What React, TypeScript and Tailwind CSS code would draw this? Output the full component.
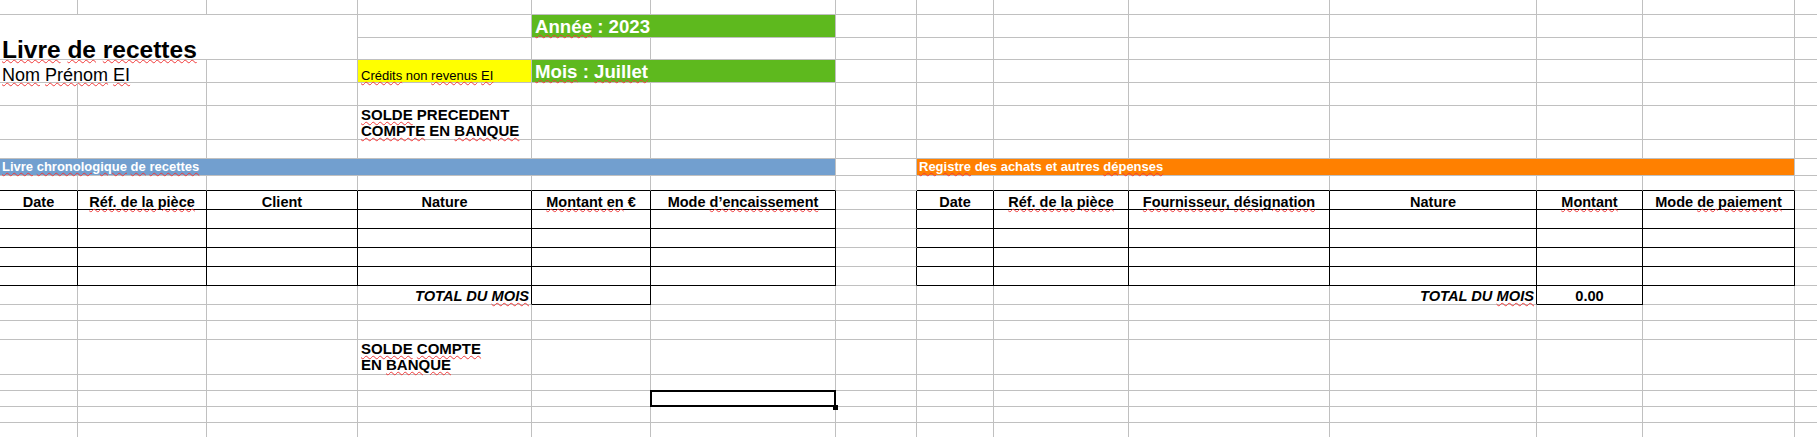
import React from 'react';

// petit soulignement ondulé rouge (correcteur orthographique)
const Sq = ({ children }: { children: React.ReactNode }) => (
  <span className="underline decoration-wavy decoration-[#f03a3a] decoration-1 underline-offset-[1px]">
    {children}
  </span>
);

type CellSpec = {
  span?: number;
  rows?: number;
  className?: string;
  content?: React.ReactNode;
};

const COL_SPAN: Record<number, string> = {
  1: '',
  2: 'col-span-2',
  3: 'col-span-3',
  6: 'col-span-6',
};

const ROW_SPAN: Record<number, string> = {
  1: '',
  2: 'row-span-2',
};

const header = 'flex items-end justify-center pb-0 text-[14.5px] font-bold leading-none whitespace-nowrap';

const leftHeaders: React.ReactNode[] = [
  'Date',
  <Sq>Réf. de la pièce</Sq>,
  'Client',
  'Nature',
  <>
    <Sq>Montant en</Sq> €
  </>,
  <>
    Mode <Sq>d’encaissement</Sq>
  </>,
];

const rightHeaders: React.ReactNode[] = [
  'Date',
  <Sq>Réf. de la pièce</Sq>,
  <>
    <Sq>Fournisseur</Sq>, <Sq>désignation</Sq>
  </>,
  'Nature',
  <Sq>Montant</Sq>,
  <>
    Mode <Sq>de paiement</Sq>
  </>,
];

const specs: Record<string, CellSpec> = {
  '2-1': {
    span: 3,
    rows: 2,
    className: 'flex items-end pl-[2px] text-[24.5px] font-bold leading-[18px] whitespace-nowrap',
    content: (
      <span>
        <Sq>Livre</Sq> <Sq>de</Sq> <Sq>recettes</Sq>
      </span>
    ),
  },
  '2-5': {
    span: 2,
    className: 'flex items-end bg-[#5eb91e] pl-[3px] text-[18.67px] font-bold leading-none text-white',
    content: (
      <span>
        <Sq>Année</Sq> : 2023
      </span>
    ),
  },
  '4-1': {
    span: 2,
    className: 'flex items-end pl-[2px] text-[18px] leading-[14px] whitespace-nowrap',
    content: (
      <span>
        <Sq>Nom</Sq> <Sq>Prénom</Sq> <Sq>EI</Sq>
      </span>
    ),
  },
  '4-4': {
    className: 'flex items-end bg-[#ffff00] pl-[3px] text-[13px] leading-none whitespace-nowrap',
    content: (
      <span>
        <Sq>Crédits</Sq> non <Sq>revenus</Sq> <Sq>EI</Sq>
      </span>
    ),
  },
  '4-5': {
    span: 2,
    className: 'flex items-end bg-[#5eb91e] pl-[3px] text-[18.67px] font-bold leading-none text-white',
    content: (
      <span>
        <Sq>Mois</Sq> : <Sq>Juillet</Sq>
      </span>
    ),
  },
  '6-4': {
    className: 'flex items-end pl-[3px] text-[15px] font-bold leading-[16px] whitespace-nowrap',
    content: (
      <span>
        <Sq>SOLDE</Sq> PRECEDENT
        <br />
        <Sq>COMPTE</Sq> EN <Sq>BANQUE</Sq>
      </span>
    ),
  },
  '8-1': {
    span: 6,
    className: 'flex items-end bg-[#729fcf] pl-[2px] pb-[2px] text-[13px] font-bold leading-none text-white',
    content: (
      <span>
        <Sq>Livre</Sq> <Sq>chronologique</Sq> <Sq>de</Sq> <Sq>recettes</Sq>
      </span>
    ),
  },
  '8-8': {
    span: 6,
    className: 'flex items-end bg-[#ff8000] pl-[2px] pb-[2px] text-[13px] font-bold leading-none text-white',
    content: (
      <span>
        <Sq>Registre</Sq> des achats et autres <Sq>dépenses</Sq>
      </span>
    ),
  },
  '15-4': {
    className: 'flex items-end justify-end pr-[2px] text-[14.67px] font-bold italic leading-none whitespace-nowrap',
    content: (
      <span>
        TOTAL DU <Sq>MOIS</Sq>
      </span>
    ),
  },
  '15-11': {
    className: 'flex items-end justify-end pr-[2px] text-[14.67px] font-bold italic leading-none whitespace-nowrap',
    content: (
      <span>
        TOTAL DU <Sq>MOIS</Sq>
      </span>
    ),
  },
  '15-12': {
    className: 'flex items-end justify-center text-[14.67px] font-bold leading-none',
    content: <span>0.00</span>,
  },
  '18-4': {
    className: 'flex items-end pl-[3px] pb-px text-[15px] font-bold leading-[16px] whitespace-nowrap',
    content: (
      <span>
        <Sq>SOLDE</Sq> <Sq>COMPTE</Sq>
        <br />
        EN <Sq>BANQUE</Sq>
      </span>
    ),
  },
  '20-6': {
    className: 'relative',
    content: (
      <>
        <div className="absolute -top-px -left-px -right-px -bottom-px z-10 border-2 border-black" />
        <div className="absolute -right-[3px] -bottom-[4px] z-10 h-[5px] w-[5px] bg-black" />
      </>
    ),
  },
};

leftHeaders.forEach((h, i) => {
  specs[`10-${i + 1}`] = { className: header, content: <span>{h}</span> };
});
rightHeaders.forEach((h, i) => {
  specs[`10-${i + 8}`] = { className: header, content: <span>{h}</span> };
});

// bordures noires des deux tableaux et des cases "total"
const blackRight = (r: number, c: number) =>
  (r >= 10 && r <= 14 && c >= 1 && c <= 13) ||
  (r === 15 && (c === 4 || c === 5 || c === 11 || c === 12));

const blackBottom = (r: number, c: number) =>
  (r >= 9 && r <= 14 && ((c >= 1 && c <= 6) || (c >= 8 && c <= 13))) ||
  (r === 15 && (c === 5 || c === 12));

const ROWS = 22;
const COLS = 14;

export default function App() {
  const cells: React.ReactNode[] = [];
  const covered = new Set<string>();

  for (let r = 1; r <= ROWS; r++) {
    for (let c = 1; c <= COLS; c++) {
      const key = `${r}-${c}`;
      if (covered.has(key)) continue;
      const spec = specs[key] ?? {};
      const span = spec.span ?? 1;
      const rows = spec.rows ?? 1;
      for (let rr = r; rr < r + rows; rr++) {
        for (let cc = c; cc < c + span; cc++) covered.add(`${rr}-${cc}`);
      }
      const lastR = r + rows - 1;
      const lastC = c + span - 1;
      const right = blackRight(lastR, lastC) ? 'border-r-black' : 'border-r-[#c0c0c0]';
      const bottom = blackBottom(lastR, lastC) ? 'border-b-black' : 'border-b-[#c0c0c0]';

      cells.push(
        <div
          key={key}
          className={`min-w-0 border-r border-b ${right} ${bottom} ${COL_SPAN[span]} ${ROW_SPAN[rows]} ${spec.className ?? ''}`}
        >
          {spec.content}
        </div>
      );
    }
  }

  return (
    <div className="h-[437px] w-[1817px] overflow-hidden bg-white font-['Liberation_Sans',Arial,sans-serif] text-black">
      <div className="grid w-[1825px] grid-cols-[78px_129px_151px_174px_119px_185px_81px_77px_135px_201px_207px_106px_152px_30px] grid-rows-[15px_23px_22px_23px_23px_34px_19px_17px_15px_19px_19px_19px_19px_19px_19px_16px_19px_35px_16px_16px_16px_16px]">
        {cells}
      </div>
    </div>
  );
}
